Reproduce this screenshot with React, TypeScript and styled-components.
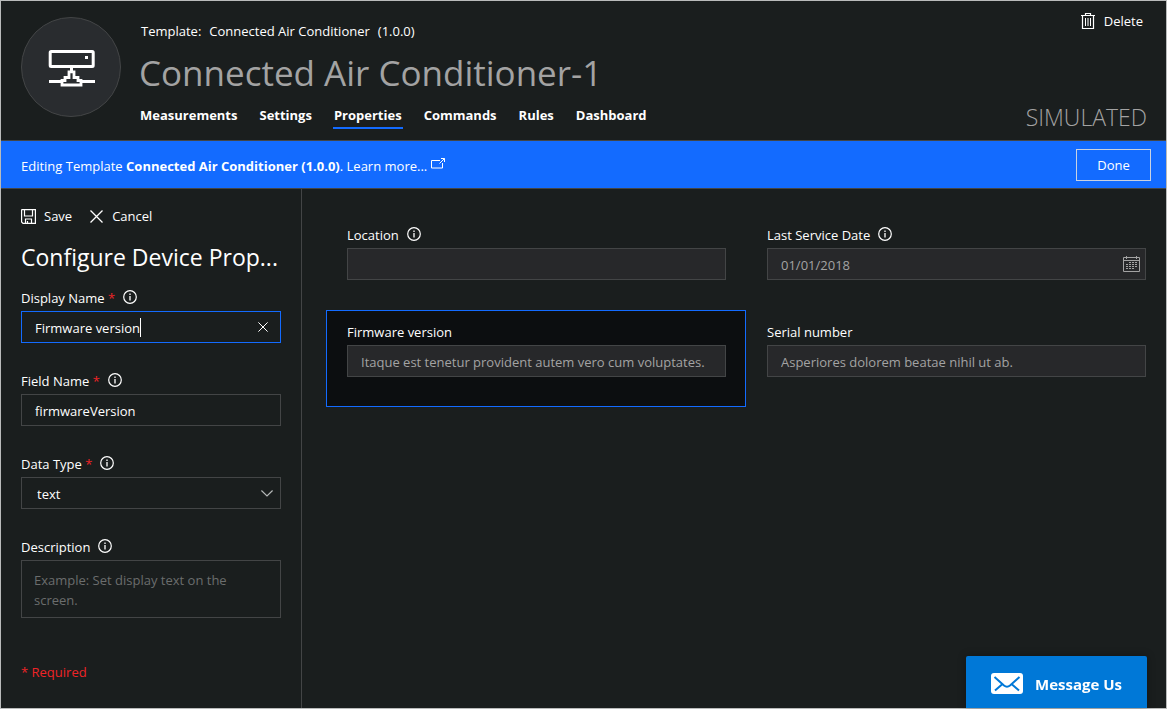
import React from "react";
import styled, { createGlobalStyle } from "styled-components";

const color = {
  page: "#1a1e1e",
  line: "#434546",
  field: "#27282a",
  blue: "#136bff",
  text: "#ffffff",
  muted: "#a3a3a3",
  red: "#ee2427",
};

const GlobalStyle = createGlobalStyle`
  *, *::before, *::after { box-sizing: border-box; }
  body {
    margin: 0;
    background: ${color.page};
    color: ${color.text};
    font-family: "Open Sans", "Noto Sans", sans-serif;
    font-size: 13px;
    line-height: 20px;
  }
  button, input, select, textarea { font: inherit; color: inherit; margin: 0; }
  a { color: inherit; text-decoration: none; }
`;

const Page = styled.div`
  display: flex;
  flex-direction: column;
  min-height: 100vh;
  border: 1px solid #b9bbbb;
`;

const Header = styled.header`
  display: flex;
  gap: 18px;
  padding: 16px 19px 11px 20px;
  border-bottom: 1px solid ${color.line};
`;

const Avatar = styled.div`
  width: 100px;
  height: 100px;
  flex: none;
  border: 1px solid ${color.line};
  border-radius: 50%;
  background: #292c2f;
`;

const Heading = styled.div`
  flex: 1;
  padding-top: 4px;
`;

const TemplateLine = styled.div`
  display: flex;
  gap: 8px;
  padding-left: 2px;
`;

const Title = styled.h1`
  margin: 8px 0;
  font-size: 35px;
  font-weight: 400;
  line-height: 48px;
  color: ${color.muted};
`;

const Tabs = styled.nav`
  display: flex;
  gap: 20px;
`;

const Tab = styled.a<{ $active?: boolean }>`
  padding: 0 1px 2px;
  border-bottom: 2px solid ${(p) => (p.$active ? color.blue : "transparent")};
  font-weight: 700;
`;

const HeaderSide = styled.div`
  display: flex;
  flex-direction: column;
  justify-content: space-between;
  align-items: flex-end;
  margin: -6px 0 -4px;
`;

const IconButton = styled.button<{ $gap?: number }>`
  display: flex;
  align-items: center;
  gap: ${(p) => p.$gap ?? 8}px;
  padding: 0;
  border: 0;
  background: none;
  cursor: pointer;
`;

const DeleteButton = styled(IconButton)`
  margin-right: 4px;
`;

const Status = styled.div`
  font-size: 23px;
  font-weight: 300;
  line-height: 32px;
  color: ${color.muted};
`;

const Banner = styled.div`
  display: flex;
  align-items: center;
  justify-content: space-between;
  padding: 8px 15px 7px 20px;
  border-bottom: 1px solid ${color.line};
  background: ${color.blue};
`;

const BannerText = styled.p`
  margin: 0;
  padding-top: 2px;
`;

const DoneButton = styled.button`
  width: 75px;
  height: 32px;
  padding: 0;
  border: 1px solid #c9d2e2;
  background: none;
  cursor: pointer;
`;

const Body = styled.div`
  display: flex;
  flex: 1;
`;

const Sidebar = styled.aside`
  width: 301px;
  flex: none;
  padding: 17px 20px 20px;
  border-right: 1px solid ${color.line};
`;

const Actions = styled.div`
  display: flex;
  gap: 18px;
`;

const PanelTitle = styled.h2`
  margin: 15px 0;
  font-size: 23px;
  font-weight: 400;
  line-height: 32px;
  white-space: nowrap;
`;

const Field = styled.div`
  margin-bottom: 28px;
`;

const LabelRow = styled.div`
  display: flex;
  align-items: center;
  gap: 8px;
  height: 20px;
  margin-bottom: 3px;
`;

const Star = styled.span`
  color: ${color.red};
`;

const Control = styled.div`
  position: relative;
  display: flex;
`;

const Input = styled.input<{ $focused?: boolean; $filled?: boolean }>`
  width: 100%;
  height: 32px;
  padding: 2px 13px 0;
  border: 1px solid ${(p) => (p.$focused ? color.blue : color.line)};
  border-radius: 0;
  outline: 0;
  background: ${(p) => (p.$filled ? color.field : "transparent")};
  color: ${(p) => (p.$filled ? color.muted : color.text)};
`;

const Select = styled.select`
  width: 100%;
  height: 32px;
  padding: 2px 15px 0;
  border: 1px solid ${color.line};
  border-radius: 0;
  outline: 0;
  appearance: none;
  background: ${color.page};
`;

const TextArea = styled.textarea`
  width: 100%;
  height: 58px;
  padding: 9px 12px;
  border: 1px solid ${color.line};
  border-radius: 0;
  outline: 0;
  resize: none;
  overflow: hidden;
  background: transparent;
  &::placeholder { color: #6b6d6d; opacity: 1; }
`;

const Adornment = styled.span<{ $right: number }>`
  position: absolute;
  top: 0;
  bottom: 0;
  right: ${(p) => p.$right}px;
  display: flex;
  align-items: center;
  pointer-events: none;
`;

const AdornmentButton = styled(IconButton)<{ $right: number }>`
  position: absolute;
  top: 0;
  bottom: 0;
  right: ${(p) => p.$right}px;
`;

const Caret = styled.span`
  position: absolute;
  left: 119px;
  top: 7px;
  width: 1px;
  height: 19px;
  background: ${color.text};
`;

const Required = styled.p`
  margin: 44px 0 0;
  color: ${color.red};
`;

const Canvas = styled.main`
  flex: 1;
  padding: 24px 0 60px 24px;
`;

const Grid = styled.div`
  display: grid;
  grid-template-columns: repeat(2, 1fr);
`;

const Cell = styled.div<{ $selected?: boolean }>`
  padding: 11px 19px 29px 20px;
  border: 1px solid ${(p) => (p.$selected ? color.blue : "transparent")};
  background: ${(p) => (p.$selected ? "#0c0e10" : "transparent")};
`;

const MessageButton = styled.button`
  position: fixed;
  right: 20px;
  bottom: 1px;
  display: flex;
  align-items: center;
  justify-content: center;
  gap: 12px;
  width: 181px;
  height: 52px;
  padding: 3px 0 0;
  border: 0;
  border-radius: 2px 2px 0 0;
  background: #0078d7;
  box-shadow: 0 0 8px rgba(0, 0, 0, 0.3);
  font-size: 15px;
  font-weight: 700;
  cursor: pointer;
`;

const Icon = styled.svg`
  display: block;
  flex: none;
  fill: none;
  stroke: currentColor;
`;

const LinkIcon = styled(Icon)`
  display: inline-block;
  margin-left: 4px;
`;

const InfoIcon = () => (
  <Icon width="14" height="16" viewBox="0 0 14 16" aria-hidden="true">
    <circle cx="7" cy="7" r="6.3" strokeWidth="1.2" />
    <path d="M7 6v4.5M7 3.6v1.3" strokeWidth="1.3" />
  </Icon>
);

const DeviceIcon = () => (
  <Icon width="98" height="98" viewBox="22 18 98 98" aria-hidden="true">
    <rect x="50.2" y="51.5" width="43" height="15" rx="1" strokeWidth="3" />
    <rect x="85" y="56" width="3" height="3" fill="currentColor" stroke="none" />
    <path d="M71.5 67v5" strokeWidth="3" />
    <path d="M49 81.5h14M81 81.5h14" strokeWidth="3" />
    <path
      d="M69 71.800h5v5.700h4v3h3v4.500h-19v-4.500h3v-3h4z"
      strokeWidth="2.8"
    />
  </Icon>
);

const TrashIcon = () => (
  <Icon width="14" height="16" viewBox="0 0 14 16" aria-hidden="true">
    <path d="M0 2.5h14M4.5 2V.5h5V2M1.5 3v12.5h11V3" strokeWidth="1.2" />
    <path d="M4.5 5v8M7 5v8M9.5 5v8" />
  </Icon>
);

const SaveIcon = () => (
  <Icon width="15" height="15" viewBox="0 0 15 15" aria-hidden="true">
    <path d="M.6 1v12l1.4 1.4h12.4V.6H1zM3.5 1v6h8V1M4.5 14v-4h6v4M6.5 12v2" strokeWidth="1.2" />
  </Icon>
);

const CrossIcon = ({ size }: { size: number }) => (
  <Icon width={size} height={size} viewBox="0 0 13 13" aria-hidden="true">
    <path d="M.5 .5l12 12M12.5 .5l-12 12" strokeWidth="1.3" />
  </Icon>
);

const ExternalIcon = () => (
  <LinkIcon width="14" height="13" viewBox="0 0 14 13" aria-hidden="true">
    <path d="M9 2.500H.5v7.500h11V5M8.500 5.500l5-5M10 .5h3.500V4" />
  </LinkIcon>
);

const ChevronIcon = () => (
  <Icon width="12" height="7" viewBox="0 0 12 7" aria-hidden="true">
    <path d="M.4 .5L6 6l5.6-5.5" stroke="#b5b8b8" strokeWidth="1.2" />
  </Icon>
);

const CalendarIcon = () => (
  <Icon width="17" height="16" viewBox="0 0 17 16" aria-hidden="true">
    <g stroke="#a3a3a3">
      <path d="M.5 1.5h16v14H.5zM1 4.5h15M3.5 0v3M13.5 0v3" />
      <path d="M6 6.5h9M3 8.5h12M3 10.5h12M3 12.5h9" strokeDasharray="2 1" />
    </g>
  </Icon>
);

const MailIcon = () => (
  <Icon width="32" height="21" viewBox="0 0 32 21" aria-hidden="true">
    <rect width="32" height="21" rx="3" fill="#fff" stroke="none" />
    <path
      d="M3.5 4l9.5 8.5c2 1.6 4 1.6 6 0L28.5 4M4 17.5l7.5-6.5M28 17.5L20.5 11"
      stroke="#0078d7"
      strokeWidth="2"
    />
  </Icon>
);

interface LabelProps {
  htmlFor: string;
  text: string;
  required?: boolean;
  info?: boolean;
}

const FieldLabel = ({ htmlFor, text, required, info }: LabelProps) => (
  <LabelRow>
    <label htmlFor={htmlFor}>
      {text}
      {required && <Star> *</Star>}
    </label>
    {info && <InfoIcon />}
  </LabelRow>
);

const tabs = ["Measurements", "Settings", "Properties", "Commands", "Rules", "Dashboard"];

const properties = [
  { id: "location", label: "Location", value: "", info: true },
  { id: "service", label: "Last Service Date", value: "01/01/2018", info: true, date: true },
  {
    id: "firmware",
    label: "Firmware version",
    value: "Itaque est tenetur provident autem vero cum voluptates.",
    selected: true,
  },
  { id: "serial", label: "Serial number", value: "Asperiores dolorem beatae nihil ut ab." },
];

export default function App() {
  return (
    <Page>
      <GlobalStyle />
      <Header>
        <Avatar>
          <DeviceIcon />
        </Avatar>
        <Heading>
          <TemplateLine>
            <span>Template:</span>
            <span>Connected Air Conditioner</span>
            <span>(1.0.0)</span>
          </TemplateLine>
          <Title>Connected Air Conditioner-1</Title>
          <Tabs>
            {tabs.map((tab) => (
              <Tab key={tab} href="#" $active={tab === "Properties"}>
                {tab}
              </Tab>
            ))}
          </Tabs>
        </Heading>
        <HeaderSide>
          <DeleteButton $gap={9}>
            <TrashIcon />
            Delete
          </DeleteButton>
          <Status>SIMULATED</Status>
        </HeaderSide>
      </Header>

      <Banner>
        <BannerText>
          Editing Template <strong>Connected Air Conditioner (1.0.0)</strong>.{" "}
          <a href="#">
            Learn more...
            <ExternalIcon />
          </a>
        </BannerText>
        <DoneButton>Done</DoneButton>
      </Banner>

      <Body>
        <Sidebar>
          <Actions>
            <IconButton>
              <SaveIcon />
              Save
            </IconButton>
            <IconButton $gap={9}>
              <CrossIcon size={13} />
              Cancel
            </IconButton>
          </Actions>
          <PanelTitle>Configure Device Prop...</PanelTitle>
          <Field>
            <FieldLabel htmlFor="displayName" text="Display Name" required info />
            <Control>
              <Input id="displayName" defaultValue="Firmware version" $focused />
              <Caret />
              <AdornmentButton $right={13} aria-label="Clear">
                <CrossIcon size={10} />
              </AdornmentButton>
            </Control>
          </Field>
          <Field>
            <FieldLabel htmlFor="fieldName" text="Field Name" required info />
            <Control>
              <Input id="fieldName" defaultValue="firmwareVersion" />
            </Control>
          </Field>
          <Field>
            <FieldLabel htmlFor="dataType" text="Data Type" required info />
            <Control>
              <Select id="dataType" defaultValue="text">
                <option value="text">text</option>
              </Select>
              <Adornment $right={8}>
                <ChevronIcon />
              </Adornment>
            </Control>
          </Field>
          <FieldLabel htmlFor="description" text="Description" info />
          <Control>
            <TextArea id="description" placeholder="Example: Set display text on the screen." />
          </Control>
          <Required>* Required</Required>
        </Sidebar>

        <Canvas>
          <Grid>
            {properties.map((p) => (
              <Cell key={p.id} $selected={p.selected}>
                <FieldLabel htmlFor={p.id} text={p.label} info={p.info} />
                <Control>
                  <Input id={p.id} defaultValue={p.value} readOnly $filled />
                  {p.date && (
                    <AdornmentButton $right={6} aria-label="Choose date">
                      <CalendarIcon />
                    </AdornmentButton>
                  )}
                </Control>
              </Cell>
            ))}
          </Grid>
        </Canvas>
      </Body>

      <MessageButton>
        <MailIcon />
        Message Us
      </MessageButton>
    </Page>
  );
}
